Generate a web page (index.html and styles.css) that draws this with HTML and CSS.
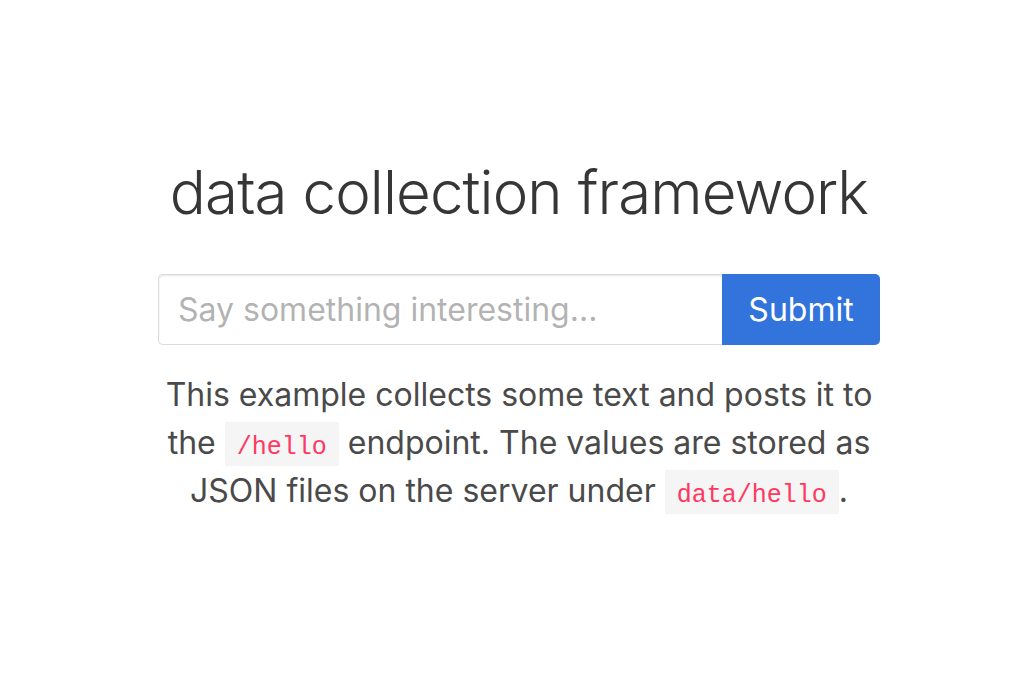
FILE: index.html
```html
<!DOCTYPE html>
<html>
<head>
<meta charset="utf-8">
<link rel="stylesheet" href="styles.css">
</head>
<body>
<section class="page">
  <div class="box">
    <h1 class="title">data collection framework</h1>
    <form class="field">
      <input class="input" type="text" placeholder="Say something interesting...">
      <button class="button" type="button">Submit</button>
    </form>
    <p class="info">This example collects some text and posts it to the <code>/hello</code> endpoint. The values are stored as JSON files on the server under <code>data/hello</code>.</p>
  </div>
</section>
</body>
</html>
```
FILE: styles.css
```css
html, body { margin: 0; padding: 0; background: #fff; }
body { font-family: Inter, "Noto Sans", sans-serif; color: #4a4a4a; }
.page { display: flex; justify-content: center; padding: 154px 0 0 13px; }
.box { width: 722px; display: flex; flex-direction: column; align-items: center; }
.title { margin: 0; font-size: 60px; font-weight: 300; color: #363636; line-height: 76px; letter-spacing: -0.9px; white-space: nowrap; }
.field { display: flex; width: 100%; margin-top: 44px; }
.input { flex: 1; min-width: 0; height: 71px; box-sizing: border-box; border: 1px solid #dbdbdb; border-right: none; border-radius: 5px 0 0 5px; box-shadow: inset 0 1px 2px rgba(10,10,10,.1); padding: 0 19px; font-family: inherit; font-size: 32px; color: #363636; outline: none; }
.input::placeholder { color: rgba(54,54,54,.4); }
.button { width: 158px; height: 71px; border: none; border-radius: 0 5px 5px 0; background: #3273dc; color: #fff; font-family: inherit; font-size: 32px; cursor: pointer; }
.info { margin: 26px 0 0; text-align: center; font-size: 32px; line-height: 48px; width: 100%; }
code { font-family: "Liberation Mono", monospace; font-size: 25px; line-height: 1; color: #ff3860; background: #f5f5f5; padding: 11px 12px 4px; }
```
